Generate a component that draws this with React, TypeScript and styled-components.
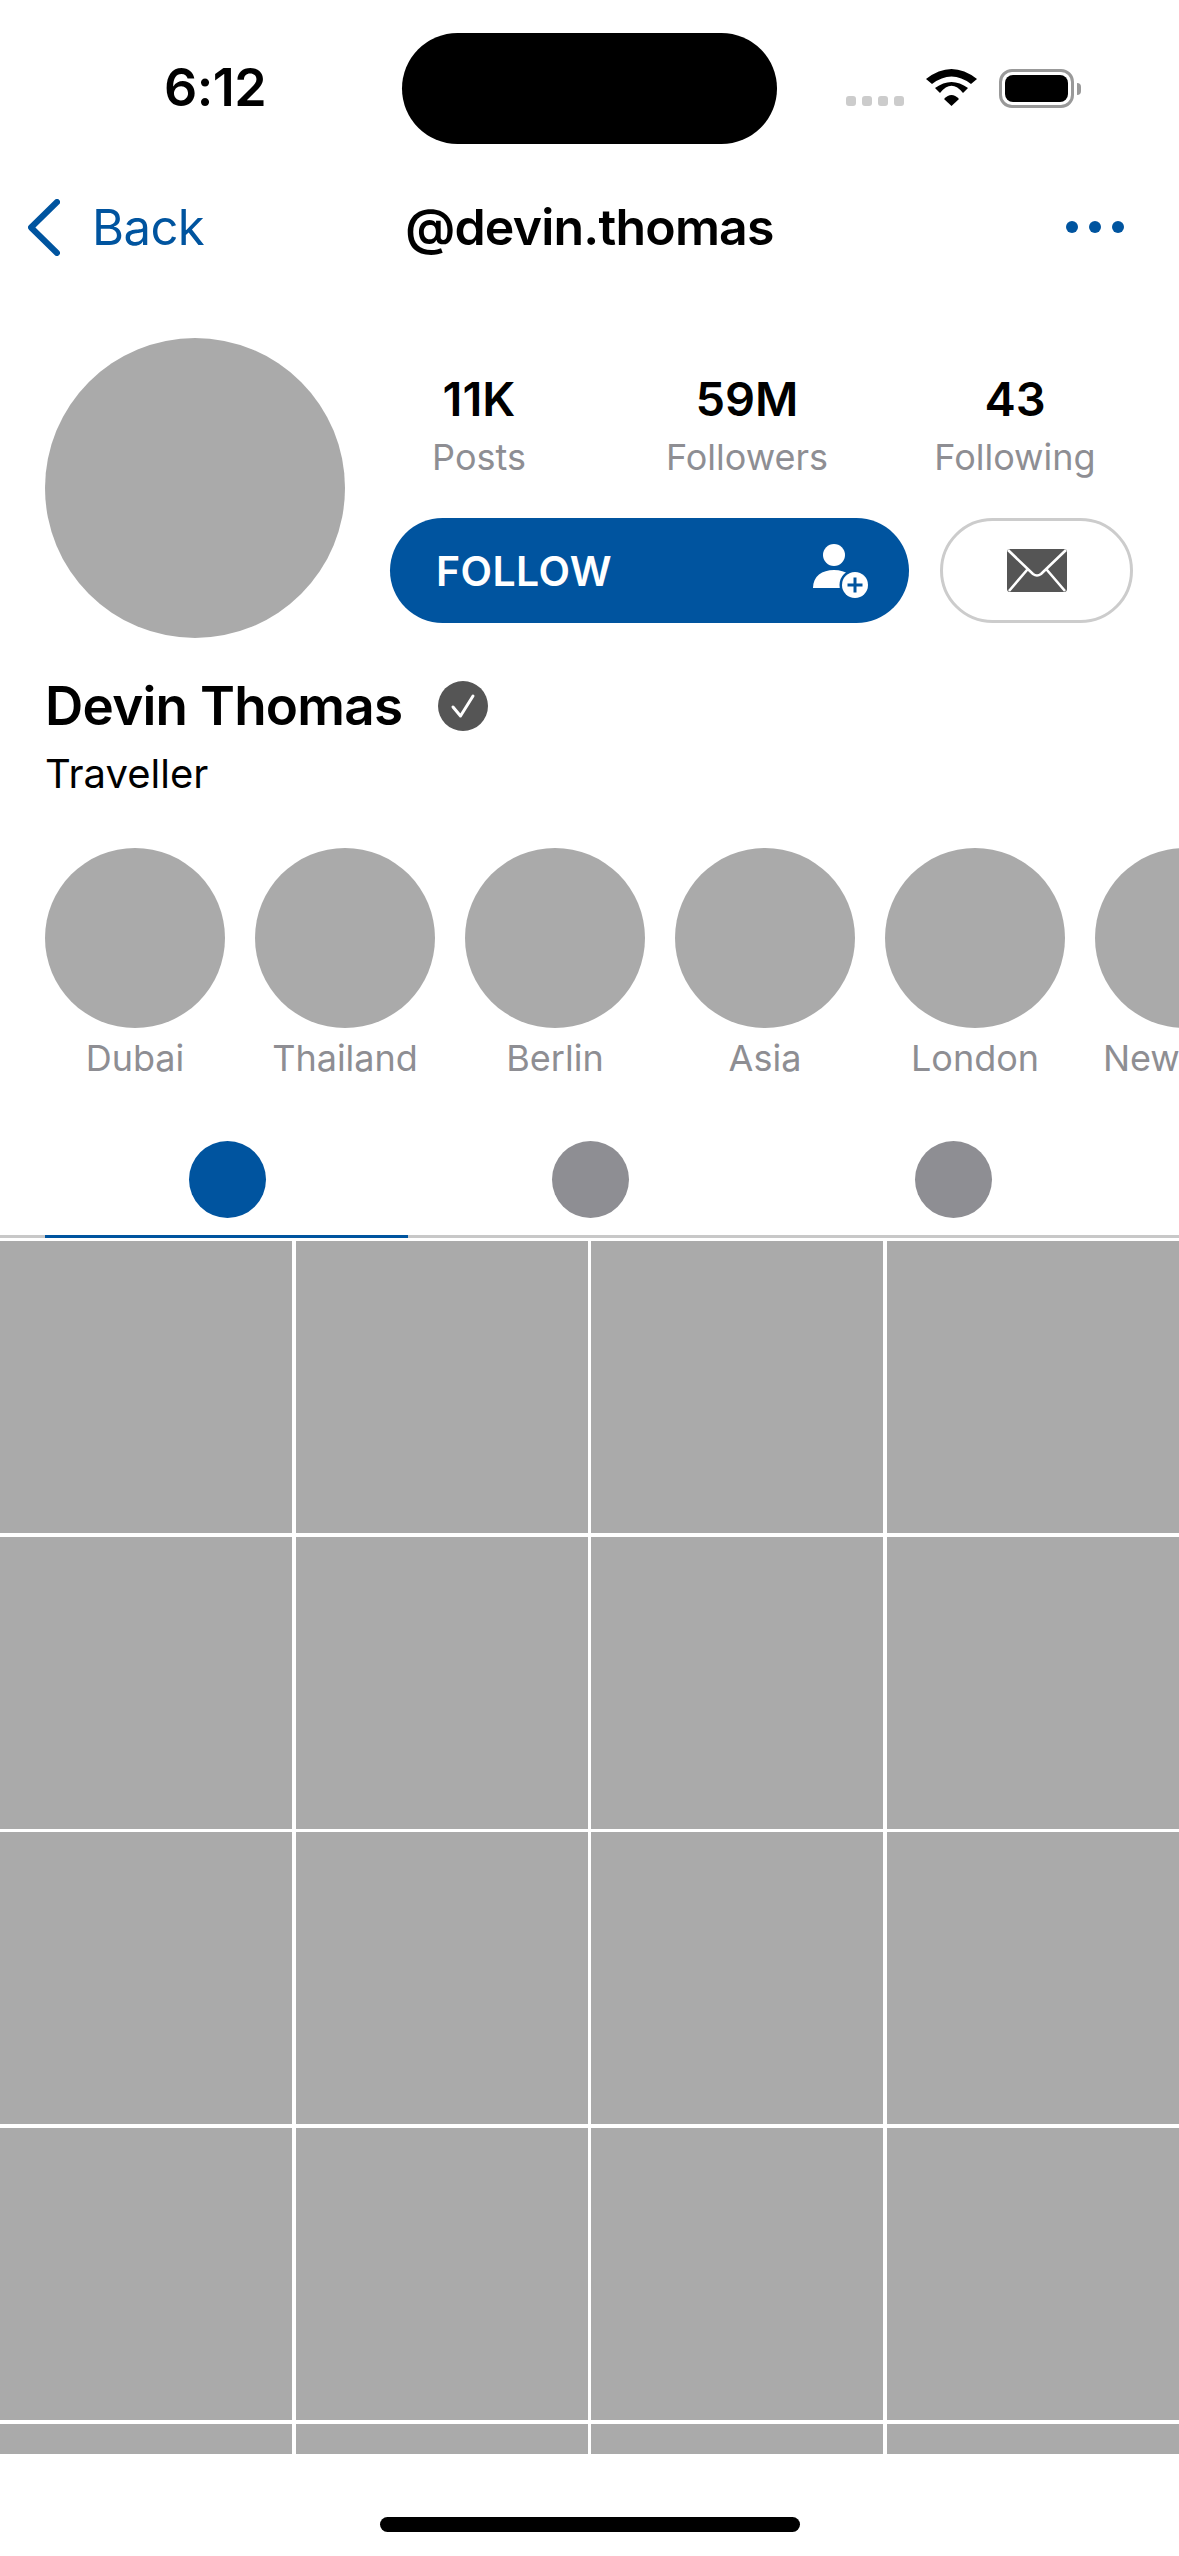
import React from 'react';
import styled, { createGlobalStyle } from 'styled-components';

const BLUE = '#00549f';
const GREY = '#aaaaaa';
const MUTED = '#8e8e93';

const GlobalStyle = createGlobalStyle`
  html, body {
    margin: 0;
    padding: 0;
    background: #fff;
  }
  * {
    box-sizing: border-box;
  }
`;

const Page = styled.div`
  width: 1179px;
  height: 2556px;
  display: flex;
  flex-direction: column;
  overflow: hidden;
  background: #fff;
  color: #000;
  font-family: Inter, "Liberation Sans", sans-serif;
`;

const StatusBar = styled.div`
  height: 144px;
  padding-top: 33px;
  display: grid;
  grid-template-columns: 402px 375px 1fr;
`;

const Clock = styled.div`
  padding: 33px 0 0 164px;
  font-size: 52px;
  line-height: 44px;
  font-weight: 600;
  letter-spacing: -0.5px;
`;

const Island = styled.div`
  height: 111px;
  border-radius: 56px;
  background: #000;
`;

const StatusIcons = styled.div`
  display: flex;
  align-items: flex-start;
  padding: 36px 0 0 69px;
`;

const SignalDots = styled.div`
  display: flex;
  gap: 6px;
  margin: 27px 22px 0 0;
`;

const SignalDot = styled.span`
  width: 10px;
  height: 10px;
  border-radius: 3px;
  background: #ccc;
`;

const Battery = styled.div`
  display: flex;
  align-items: center;
  margin-left: 22px;
`;

const BatteryShell = styled.div`
  width: 75px;
  height: 39px;
  padding: 3px;
  border: 3px solid #999;
  border-radius: 13px;
`;

const BatteryFill = styled.div`
  width: 100%;
  height: 100%;
  border-radius: 8px;
  background: #000;
`;

const BatteryCap = styled.div`
  width: 4px;
  height: 12px;
  margin-left: 3px;
  border-radius: 0 6px 6px 0;
  background: #999;
`;

const NavBar = styled.div`
  height: 166px;
  padding: 0 28px;
  display: grid;
  grid-template-columns: 1fr auto 1fr;
  align-items: center;
`;

const BackLink = styled.div`
  display: flex;
  align-items: center;
  gap: 32px;
  color: ${BLUE};
  font-size: 49px;
  letter-spacing: -0.6px;
`;

const Handle = styled.div`
  font-size: 50px;
  font-weight: 600;
  letter-spacing: -0.8px;
`;

const MoreDots = styled.div`
  display: flex;
  justify-content: flex-end;
  gap: 11px;
  padding-right: 27px;
`;

const MoreDot = styled.span`
  width: 12px;
  height: 12px;
  border-radius: 50%;
  background: ${BLUE};
`;

const Hero = styled.section`
  display: flex;
  gap: 45px;
  padding: 28px 46px 0 45px;
`;

const Avatar = styled.div`
  flex: none;
  width: 300px;
  height: 300px;
  border-radius: 50%;
  background: ${GREY};
`;

const HeroSide = styled.div`
  flex: 1;
  min-width: 0;
`;

const Stats = styled.div`
  display: grid;
  grid-template-columns: repeat(3, 268px);
  margin: 35px 0 0 -45px;
`;

const Stat = styled.div`
  display: flex;
  flex-direction: column;
  align-items: center;
`;

const StatValue = styled.div`
  font-size: 47px;
  line-height: 52px;
  font-weight: 600;
`;

const StatLabel = styled.div`
  margin-top: 10px;
  font-size: 36px;
  line-height: 44px;
  color: ${MUTED};
`;

const Actions = styled.div`
  display: flex;
  gap: 31px;
  margin-top: 39px;
`;

const FollowButton = styled.div`
  flex: 1;
  height: 105px;
  padding: 0 41px 0 46px;
  display: flex;
  align-items: center;
  justify-content: space-between;
  border-radius: 53px;
  background: ${BLUE};
  color: #fff;
  font-size: 41px;
  font-weight: 600;
  letter-spacing: 0.4px;
`;

const MessageButton = styled.div`
  flex: none;
  width: 193px;
  height: 105px;
  display: flex;
  align-items: center;
  justify-content: center;
  border: 3px solid #ccc;
  border-radius: 53px;
`;

const Bio = styled.section`
  padding: 38px 45px 0;
`;

const NameRow = styled.div`
  display: flex;
  align-items: center;
  gap: 36px;
  height: 60px;
`;

const Name = styled.h1`
  margin: 0;
  font-size: 53px;
  font-weight: 600;
  line-height: 60px;
  letter-spacing: -0.75px;
`;

const Verified = styled.div`
  width: 50px;
  height: 50px;
  display: flex;
  align-items: center;
  justify-content: center;
  border-radius: 50%;
  background: #555;
`;

const Occupation = styled.div`
  margin-top: 13px;
  font-size: 40px;
  line-height: 50px;
`;

const Stories = styled.div`
  display: flex;
  gap: 30px;
  padding: 49px 0 0 45px;
  width: 1400px;
`;

const Story = styled.div`
  flex: none;
  width: 180px;
  display: flex;
  flex-direction: column;
  align-items: center;
`;

const StoryCircle = styled.div`
  width: 180px;
  height: 180px;
  border-radius: 50%;
  background: ${GREY};
`;

const StoryLabel = styled.div`
  margin-top: 8px;
  font-size: 36px;
  line-height: 44px;
  white-space: nowrap;
  color: ${MUTED};
`;

const Tabs = styled.div`
  display: flex;
  margin-top: 60px;
  padding: 0 45px;
  height: 98px;
  border-bottom: 3px solid #c8c8c8;
`;

const Tab = styled.div<{ $active?: boolean }>`
  flex: 1;
  height: 98px;
  padding: 1px 0 0 2px;
  display: flex;
  justify-content: center;
  border-bottom: 3px solid ${({ $active }) => ($active ? BLUE : 'transparent')};
`;

const TabDot = styled.div<{ $active?: boolean }>`
  width: 77px;
  height: 77px;
  border-radius: 50%;
  background: ${({ $active }) => ($active ? BLUE : MUTED)};
`;

const PhotoGrid = styled.div`
  margin-top: 3px;
  height: 1213px;
  overflow: hidden;
  display: grid;
  grid-template-columns: repeat(4, 1fr);
  grid-auto-rows: 292px;
  gap: 3.67px;
`;

const Photo = styled.div`
  background: ${GREY};
`;

const HomeArea = styled.div`
  flex: 1;
  display: flex;
  justify-content: center;
  padding-top: 63px;
`;

const HomeBar = styled.div`
  width: 420px;
  height: 15px;
  border-radius: 8px;
  background: #000;
`;

const storyNames = ['Dubai', 'Thailand', 'Berlin', 'Asia', 'London', 'New York'];
const stats = [
  { value: '11K', label: 'Posts' },
  { value: '59M', label: 'Followers' },
  { value: '43', label: 'Following' },
];

export default function App() {
  return (
    <Page>
      <GlobalStyle />
      <StatusBar>
        <Clock>6:12</Clock>
        <Island />
        <StatusIcons>
          <SignalDots>
            <SignalDot />
            <SignalDot />
            <SignalDot />
            <SignalDot />
          </SignalDots>
          <svg width="51" height="37" viewBox="0 0 51 37">
            <path d="M0 10Q25.5 -10 51 10L45 15Q25.5 0 6 15Z" />
            <path d="M9 19Q25.5 7 42 19L37 24Q25.5 9.4 14 24Z" />
            <path d="M18 30Q25.5 22 33 30L25.5 37Z" />
          </svg>
          <Battery>
            <BatteryShell>
              <BatteryFill />
            </BatteryShell>
            <BatteryCap />
          </Battery>
        </StatusIcons>
      </StatusBar>

      <NavBar>
        <BackLink>
          <svg width="32" height="57" viewBox="0 0 32 57" fill="none">
            <path d="M29 3L3 28.5L29 54" stroke={BLUE} strokeWidth="6" strokeLinecap="round" strokeLinejoin="round" />
          </svg>
          Back
        </BackLink>
        <Handle>@devin.thomas</Handle>
        <MoreDots>
          <MoreDot />
          <MoreDot />
          <MoreDot />
        </MoreDots>
      </NavBar>

      <Hero>
        <Avatar />
        <HeroSide>
          <Stats>
            {stats.map(s => (
              <Stat key={s.label}>
                <StatValue>{s.value}</StatValue>
                <StatLabel>{s.label}</StatLabel>
              </Stat>
            ))}
          </Stats>
          <Actions>
            <FollowButton>
              FOLLOW
              <svg width="55" height="54" viewBox="0 0 55 54">
                <ellipse cx="21" cy="11" rx="11" ry="11" fill="#fff" />
                <path d="M0 44C0 32 9 26 21 26C33 26 42 32 42 44Z" fill="#fff" />
                <circle cx="42" cy="41" r="15.5" fill={BLUE} />
                <circle cx="42" cy="41" r="13" fill="#fff" />
                <path d="M42 33.5V48.5M34.5 41H49.5" stroke={BLUE} strokeWidth="3" />
              </svg>
            </FollowButton>
            <MessageButton>
              <svg width="60" height="43" viewBox="0 0 60 43">
                <rect width="60" height="43" rx="3" fill="#555" />
                <path d="M1 1L26 25Q30 28 34 25L59 1M2 42L20 21M58 42L40 21" fill="none" stroke="#fff" strokeWidth="2.6" />
              </svg>
            </MessageButton>
          </Actions>
        </HeroSide>
      </Hero>

      <Bio>
        <NameRow>
          <Name>Devin Thomas</Name>
          <Verified>
            <svg width="26" height="26" viewBox="0 0 26 26" fill="none">
              <path d="M3 14L10.5 23L23 3" stroke="#fff" strokeWidth="3" strokeLinecap="round" strokeLinejoin="round" />
            </svg>
          </Verified>
        </NameRow>
        <Occupation>Traveller</Occupation>
      </Bio>

      <Stories>
        {storyNames.map(name => (
          <Story key={name}>
            <StoryCircle />
            <StoryLabel>{name}</StoryLabel>
          </Story>
        ))}
      </Stories>

      <Tabs>
        <Tab $active>
          <TabDot $active />
        </Tab>
        <Tab>
          <TabDot />
        </Tab>
        <Tab>
          <TabDot />
        </Tab>
      </Tabs>

      <PhotoGrid>
        {Array.from({ length: 20 }, (_, i) => (
          <Photo key={i} />
        ))}
      </PhotoGrid>

      <HomeArea>
        <HomeBar />
      </HomeArea>
    </Page>
  );
}
